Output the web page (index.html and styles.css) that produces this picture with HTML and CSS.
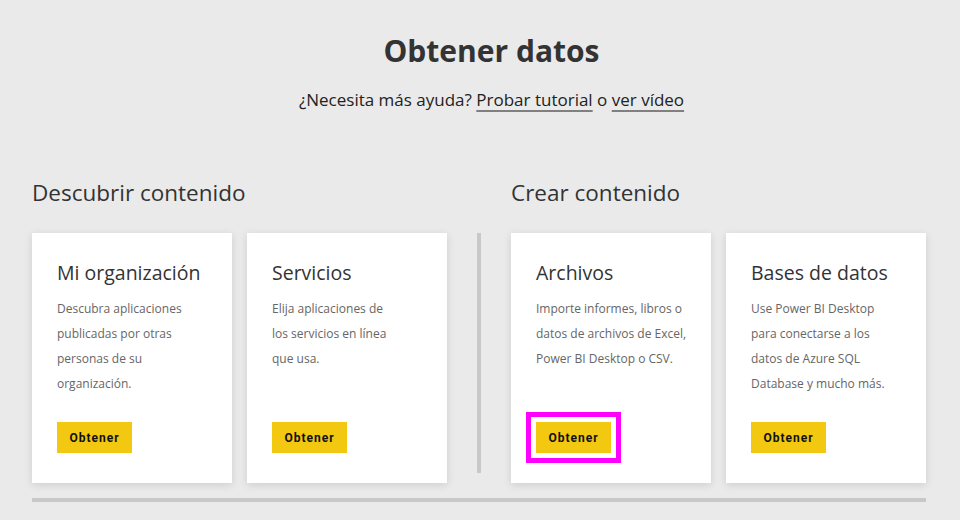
FILE: index.html
```html
<!DOCTYPE html>
<html lang="es">
<head>
<meta charset="utf-8">
<title>Obtener datos</title>
<link rel="stylesheet" href="styles.css">
</head>
<body>
<main class="page">
  <header class="header">
    <h1 class="title">Obtener datos</h1>
    <p class="help">¿Necesita más ayuda? <a class="link" href="#">Probar tutorial</a> o <a class="link" href="#">ver vídeo</a></p>
  </header>

  <div class="sections">
    <section class="section">
      <h2 class="section-title">Descubrir contenido</h2>
      <div class="cards">
        <div class="card">
          <h3 class="card-title">Mi organización</h3>
          <p class="card-text">Descubra aplicaciones<br>publicadas por otras<br>personas de su<br>organización.</p>
          <button class="btn">Obtener</button>
        </div>
        <div class="card">
          <h3 class="card-title">Servicios</h3>
          <p class="card-text">Elija aplicaciones de<br>los servicios en línea<br>que usa.</p>
          <button class="btn">Obtener</button>
        </div>
      </div>
    </section>

    <div class="divider"></div>

    <section class="section">
      <h2 class="section-title">Crear contenido</h2>
      <div class="cards">
        <div class="card">
          <h3 class="card-title">Archivos</h3>
          <p class="card-text">Importe informes, libros o<br>datos de archivos de Excel,<br>Power BI Desktop o CSV.</p>
          <button class="btn btn-highlight">Obtener</button>
        </div>
        <div class="card">
          <h3 class="card-title">Bases de datos</h3>
          <p class="card-text">Use Power BI Desktop<br>para conectarse a los<br>datos de Azure SQL<br>Database y mucho más.</p>
          <button class="btn">Obtener</button>
        </div>
      </div>
    </section>
  </div>

  <div class="bottom-bar"></div>
</main>
</body>
</html>
```

FILE: styles.css
```css
* { box-sizing: border-box; }

html, body {
  margin: 0;
  padding: 0;
  background: #eaeaea;
}

body {
  font-family: "Open Sans", "Noto Sans", "Liberation Sans", sans-serif;
  color: #333;
}

.page {
  width: 960px;
  height: 520px;
  padding: 31px 34px 0 32px;
  overflow: hidden;
}

.header {
  padding-left: 25px;
  text-align: center;
}

.title {
  margin: 0;
  font-size: 30px;
  line-height: 40px;
  font-weight: 700;
  color: #333;
}

.help {
  margin: 17px 0 0;
  font-size: 17px;
  line-height: 24px;
  color: #222;
}

.link {
  color: #222;
  text-decoration: underline;
  text-decoration-color: #808080;
  text-decoration-thickness: 2px;
  text-underline-offset: 4px;
}

.sections {
  display: flex;
  margin-top: 66px;
}

.section {
  display: flex;
  flex-direction: column;
  width: 415px;
}

.section-title {
  margin: 0;
  height: 55px;
  font-size: 22.5px;
  line-height: 30px;
  font-weight: 400;
  color: #333;
}

.cards {
  display: flex;
  gap: 15px;
}

.card {
  width: 200px;
  height: 250px;
  background: #fff;
  padding: 25px 20px 30px 25px;
  display: flex;
  flex-direction: column;
  align-items: flex-start;
  box-shadow: 0 2px 8px rgba(0, 0, 0, 0.12);
}

.card-title {
  margin: 0;
  font-size: 19.5px;
  line-height: 30px;
  font-weight: 400;
  color: #333;
  white-space: nowrap;
}

.card-text {
  margin: 8px 0 0;
  font-size: 12px;
  line-height: 25px;
  color: #666;
  white-space: nowrap;
}

.btn {
  margin-top: auto;
  width: 75px;
  height: 31px;
  border: 0;
  padding: 0;
  background: #f2c811;
  color: #111;
  font-family: "Roboto", "Liberation Sans", sans-serif;
  font-weight: 700;
  font-size: 12px;
  letter-spacing: 1px;
  cursor: pointer;
}

.btn-highlight {
  outline: 5px solid #ff00ff;
  outline-offset: 5px;
}

.divider {
  width: 4px;
  height: 240px;
  margin: 55px 30px 0;
  background: #c8c8c8;
}

.bottom-bar {
  margin-top: 15px;
  height: 4px;
  background: #c8c8c8;
}
```
